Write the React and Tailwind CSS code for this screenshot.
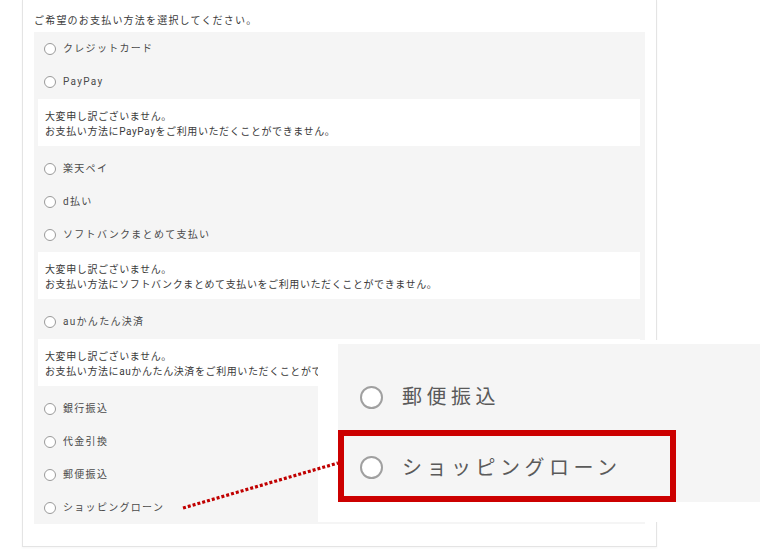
const methods = [
  { label: "クレジットカード" },
  { label: "PayPay", notice: "PayPay" },
  { label: "楽天ペイ" },
  { label: "d払い" },
  { label: "ソフトバンクまとめて支払い", notice: "ソフトバンクまとめて支払い" },
  { label: "auかんたん決済", notice: "auかんたん決済" },
  { label: "銀行振込" },
  { label: "代金引換" },
  { label: "郵便振込" },
  { label: "ショッピングローン" },
];

const Radio = ({ big = false }) => (
  <span
    className={
      big
        ? "block w-[23px] h-[23px] rounded-full border-[2.5px] border-[#a0a0a0] bg-white shrink-0"
        : "block w-[12px] h-[12px] rounded-full border-[1.5px] border-[#9a9a9a] bg-white shrink-0"
    }
  />
);

const Notice = ({ name }) => (
  <div className="ml-[4px] mr-[5px] mt-[1px] mb-[6px] h-[47px] bg-white pl-[7px] pt-[10px] text-[10px] leading-[15px] tracking-[0.6px] text-[#3a3a3a] whitespace-nowrap overflow-hidden">
    <p>大変申し訳ございません。</p>
    <p>お支払い方法に{name}をご利用いただくことができません。</p>
  </div>
);

const App = () => {
  return (
    <div className="relative w-[760px] h-[560px] bg-white overflow-hidden font-['Roboto','Noto_Sans_CJK_JP',sans-serif]">
      <div className="ml-[22px] w-[635px] border border-t-0 border-[#e4e4e4] shadow-[0_1px_2px_rgba(0,0,0,0.04)] pt-[13px] px-[11px] pb-[22px]">
        <p className="text-[10px] leading-[16px] tracking-[1.2px] text-[#3a3a3a] mb-[3px]">
          ご希望のお支払い方法を選択してください。
        </p>
        <div className="bg-[#f5f5f5]">
          {methods.map((m) => (
            <div key={m.label}>
              <div className="h-[33px] flex items-center pl-[10px] gap-[7px]">
                <Radio />
                <span className="text-[10px] tracking-[1.3px] text-[#4a4a4a]">{m.label}</span>
              </div>
              {m.notice && <Notice name={m.notice} />}
            </div>
          ))}
        </div>
      </div>

      {/* zoomed callout */}
      <div className="absolute left-[318px] top-[340px] w-[442px] h-[182px] bg-white pl-[20px] pt-[4px] pb-[20px]">
        <div className="bg-[#f5f5f5] h-full">
          <div className="h-[86px] pt-[20px] pl-[22px] flex items-center gap-[19px]">
            <Radio big />
            <span className="text-[20px] tracking-[4.5px] text-[#5a5a5a]">郵便振込</span>
          </div>
          <div className="w-[338px] h-[72px] border-[6px] border-[#cc0000] pl-[16px] pt-[3px] flex items-center gap-[19px]">
            <Radio big />
            <span className="text-[20px] tracking-[4.5px] text-[#5a5a5a]">ショッピングローン</span>
          </div>
        </div>
      </div>

      <svg className="absolute left-0 top-0 pointer-events-none" width="760" height="560">
        <line x1="183" y1="508" x2="338" y2="463" stroke="#c00000" strokeWidth="3.2" strokeDasharray="3 2" />
      </svg>
    </div>
  );
};

export default App;
